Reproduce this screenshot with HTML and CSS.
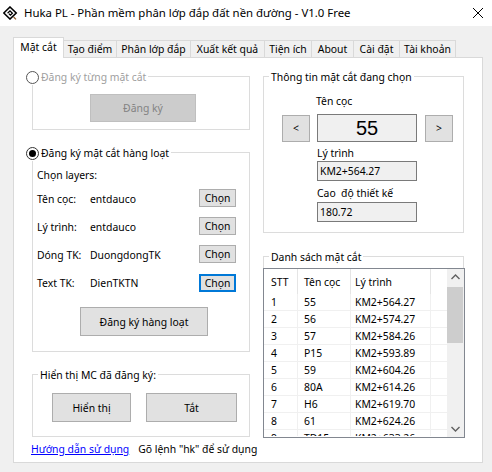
FILE: index.html
```html
<!DOCTYPE html>
<html lang="vi">
<head>
<meta charset="utf-8">
<title>Huka PL</title>
<link rel="stylesheet" href="styles.css">
</head>
<body>
<div class="titlebar">
  <svg class="logo" viewBox="0 0 15 14" aria-hidden="true">
    <polygon points="7,1 13.2,7 7,13 0.8,7" fill="none" stroke="#000" stroke-width="1.6"/>
    <path d="M4.6,7.2 L7,4.8 L9.4,7.2 L7.4,9.2 L6,7.8" fill="none" stroke="#000" stroke-width="1.3"/>
    <line x1="10.6" y1="11" x2="13" y2="13.4" stroke="#8b5a2b" stroke-width="1.2"/>
  </svg>
  <span class="title">Huka PL - Phần mềm phân lớp đắp đất nền đường - V1.0 Free</span>
  <svg class="close" viewBox="0 0 10 10" aria-hidden="true">
    <line x1="0" y1="0" x2="10" y2="10" stroke="#000" stroke-width="1"/>
    <line x1="10" y1="0" x2="0" y2="10" stroke="#000" stroke-width="1"/>
  </svg>
</div>

<div class="tabs">
  <div class="tab active t1">Mặt cắt</div>
  <div class="tab t2">Tạo điểm</div>
  <div class="tab t3">Phân lớp đắp</div>
  <div class="tab t4">Xuất kết quả</div>
  <div class="tab t5">Tiện ích</div>
  <div class="tab t6">About</div>
  <div class="tab t7">Cài đặt</div>
  <div class="tab t8">Tài khoản</div>
</div>

<div class="panel">
  <div class="left">
    <div class="group g1">
      <div class="gtitle radio-title disabled">
        <span class="radio"></span><span>Đăng ký từng mặt cắt</span>
      </div>
      <div class="btn btn-disabled b-dangky">Đăng ký</div>
    </div>

    <div class="group g2">
      <div class="gtitle radio-title">
        <span class="radio checked"></span><span>Đăng ký mặt cắt hàng loạt</span>
      </div>
      <div class="layers-label">Chọn layers:</div>
      <div class="layer-row">
        <span>Tên cọc:</span><span>entdauco</span><span class="btn btn-chon">Chọn</span>
      </div>
      <div class="layer-row">
        <span>Lý trình:</span><span>entdauco</span><span class="btn btn-chon">Chọn</span>
      </div>
      <div class="layer-row">
        <span>Dóng TK:</span><span>DuongdongTK</span><span class="btn btn-chon">Chọn</span>
      </div>
      <div class="layer-row">
        <span>Text TK:</span><span>DienTKTN</span><span class="btn btn-chon focused">Chọn</span>
      </div>
      <div class="btn b-hangloat">Đăng ký hàng loạt</div>
    </div>

    <div class="group g3">
      <div class="gtitle plain-title">Hiển thị MC đã đăng ký:</div>
      <div class="show-row">
        <div class="btn b-hienthi">Hiển thị</div>
        <div class="btn b-tat">Tắt</div>
      </div>
    </div>

    <div class="help-row">
      <a class="link" href="#">Hướng dẫn sử dụng</a>
      <span class="hint">Gõ lệnh "hk" để sử dụng</span>
    </div>
  </div>

  <div class="right">
    <div class="group ga">
      <div class="gtitle plain-title">Thông tin mặt cắt đang chọn</div>
      <div class="lbl lbl-tencoc">Tên cọc</div>
      <div class="nav-row">
        <div class="btn b-nav">&lt;</div>
        <div class="big-box">55</div>
        <div class="btn b-nav">&gt;</div>
      </div>
      <div class="lbl lbl-ly">Lý trình</div>
      <div class="tbox">KM2+564.27</div>
      <div class="lbl lbl-cao">Cao&nbsp; độ thiết kế</div>
      <div class="tbox tbox2">180.72</div>
    </div>

    <div class="group gb">
      <div class="gtitle plain-title">Danh sách mặt cắt</div>
      <div class="listview">
        <div class="lv-content">
          <div class="lv-head">
            <span class="c1">STT</span><span class="c2">Tên cọc</span><span class="c3">Lý trình</span><span class="c4"></span>
          </div>
          <div class="lv-row"><span class="c1">1</span><span class="c2">55</span><span class="c3">KM2+564.27</span><span class="c4"></span></div>
          <div class="lv-row"><span class="c1">2</span><span class="c2">56</span><span class="c3">KM2+574.27</span><span class="c4"></span></div>
          <div class="lv-row"><span class="c1">3</span><span class="c2">57</span><span class="c3">KM2+584.26</span><span class="c4"></span></div>
          <div class="lv-row"><span class="c1">4</span><span class="c2">P15</span><span class="c3">KM2+593.89</span><span class="c4"></span></div>
          <div class="lv-row"><span class="c1">5</span><span class="c2">59</span><span class="c3">KM2+604.26</span><span class="c4"></span></div>
          <div class="lv-row"><span class="c1">6</span><span class="c2">80A</span><span class="c3">KM2+614.26</span><span class="c4"></span></div>
          <div class="lv-row"><span class="c1">7</span><span class="c2">H6</span><span class="c3">KM2+619.70</span><span class="c4"></span></div>
          <div class="lv-row"><span class="c1">8</span><span class="c2">61</span><span class="c3">KM2+624.26</span><span class="c4"></span></div>
          <div class="lv-row lv-partial"><span class="c1">9</span><span class="c2">TD15</span><span class="c3">KM2+633.26</span><span class="c4"></span></div>
        </div>
        <div class="scrollbar">
          <div class="sb-btn">
            <svg viewBox="0 0 17 17" aria-hidden="true"><polyline points="4.5,10 8.5,6 12.5,10" fill="none" stroke="#606060" stroke-width="1.4"/></svg>
          </div>
          <div class="sb-thumb"></div>
          <div class="sb-track"></div>
          <div class="sb-btn">
            <svg viewBox="0 0 17 17" aria-hidden="true"><polyline points="4.5,7 8.5,11 12.5,7" fill="none" stroke="#606060" stroke-width="1.4"/></svg>
          </div>
        </div>
      </div>
    </div>
  </div>
</div>
</body>
</html>
```

FILE: styles.css
```css
* { box-sizing: border-box; }

html, body {
  margin: 0;
  padding: 0;
}

body {
  width: 492px;
  height: 472px;
  overflow: hidden;
  background: #f0f0f0;
  font-family: "Noto Sans", "Open Sans", sans-serif;
  font-size: 10.4px;
  line-height: 16px;
  color: #000;
}

/* Title bar */
.titlebar {
  height: 26px;
  background: #fff;
  display: flex;
  align-items: center;
  padding-left: 3px;
}
.logo {
  width: 15px;
  height: 14px;
  margin-right: 6px;
}
.title {
  flex: 1;
  white-space: nowrap;
  font-size: 11.4px;
}
.close {
  width: 10px;
  height: 10px;
  margin-right: 9px;
}

/* Tabs */
.tabs {
  display: flex;
  align-items: flex-end;
  height: 20px;
  margin: 11px 0 0 13px;
}
.tab {
  height: 17px;
  border-top: 1px solid #d9d9d9;
  border-right: 1px solid #d9d9d9;
  background: #f0f0f0;
  display: flex;
  align-items: center;
  justify-content: center;
  white-space: nowrap;
}
.tab.active {
  height: 21px;
  border-left: 1px solid #d9d9d9;
  background: #fff;
  margin-bottom: -1px;
  position: relative;
  z-index: 1;
  padding-bottom: 2px;
}
.t1 { width: 51px; }
.t2 { width: 53px; }
.t3 { width: 74px; }
.t4 { width: 74px; }
.t5 { width: 47px; }
.t6 { width: 42px; }
.t7 { width: 46px; }
.t8 { width: 56px; }

/* Panel */
.panel {
  margin-left: 13px;
  width: 470px;
  height: 406px;
  border: 1px solid #d9d9d9;
  background: #fff;
  display: flex;
  gap: 13px;
  padding: 18px 0 0 18px;
}
.left {
  width: 218px;
  display: flex;
  flex-direction: column;
}
.right {
  width: 201px;
  display: flex;
  flex-direction: column;
}

/* Group boxes */
.group {
  border: 1px solid #dcdcdc;
}
.gtitle {
  display: flex;
  align-items: center;
  height: 16px;
  margin-top: -8px;
  background: #fff;
  width: max-content;
  white-space: nowrap;
}
.radio-title {
  margin-left: -7px;
  padding-right: 2px;
}
.plain-title {
  margin-left: 5px;
  padding: 0 2px;
}
.disabled { color: #a0a0a0; }

.radio {
  width: 13px;
  height: 13px;
  border: 1px solid #333;
  border-radius: 50%;
  margin-right: 2px;
  background: #fff;
  display: flex;
  align-items: center;
  justify-content: center;
}
.disabled .radio { border-color: #555; }
.radio.checked::after {
  content: "";
  width: 7px;
  height: 7px;
  border-radius: 50%;
  background: #000;
}

/* Buttons */
.btn {
  background: #e1e1e1;
  border: 1px solid #adadad;
  display: flex;
  align-items: center;
  justify-content: center;
  white-space: nowrap;
}
.btn-disabled {
  background: #cccccc;
  border-color: #bfbfbf;
  color: #838383;
}

.g1 { height: 54px; }
.b-dangky {
  width: 106px;
  height: 28px;
  margin: 9px 0 0 57px;
}

.g2 {
  height: 200px;
  margin-top: 22px;
}
.layers-label {
  margin: 6px 0 0 4px;
}
.layer-row {
  display: grid;
  grid-template-columns: 53px 1fr 37px;
  align-items: center;
  height: 28px;
  padding: 0 13px 0 4px;
}
.layers-label + .layer-row { margin-top: 2px; }
.btn-chon {
  height: 18px;
  margin-bottom: 2px;
}
.btn-chon.focused {
  border: 2px solid #0078d7;
  margin-bottom: 0;
}
.b-hangloat {
  width: 128px;
  height: 29px;
  margin: 10px 0 0 47px;
}

.g3 {
  height: 63px;
  margin-top: 22px;
}
.show-row {
  display: flex;
  gap: 15px;
  margin: 10px 0 0 19px;
}
.b-hienthi { width: 79px; height: 29px; }
.b-tat { width: 91px; height: 29px; }

.help-row {
  display: flex;
  margin: 4px 0 0 -1px;
  white-space: nowrap;
}
.link {
  color: #0000ff;
  text-decoration: underline;
}
.hint { margin-left: 9px; }

/* Right: info group */
.ga { height: 157px; }
.lbl { height: 16px; }
.lbl-tencoc { margin: 8px 0 0 52px; }
.nav-row {
  display: flex;
  align-items: center;
  margin: 5px 0 0 18px;
  height: 28px;
}
.b-nav {
  width: 28px;
  height: 27px;
}
.big-box {
  width: 100px;
  height: 28px;
  margin: 0 8px 0 7px;
  border: 1px solid #7a7a7a;
  background: #f0f0f0;
  display: flex;
  align-items: center;
  justify-content: center;
  font-family: "Liberation Sans", Arial, sans-serif;
  font-size: 20px;
}
.lbl-ly { margin: 3px 0 0 53px; }
.tbox {
  width: 100px;
  height: 20px;
  margin-left: 53px;
  border: 1px solid #7a7a7a;
  background: #f0f0f0;
  padding-left: 2px;
  display: flex;
  align-items: center;
}
.lbl-cao { margin: 4px 0 0 53px; white-space: nowrap; }
.tbox2 { margin-top: 1px; }

/* Right: list group */
.gb {
  margin-top: 23px;
  border-bottom: none;
  flex: 0 0 auto;
}
.listview {
  width: 202px;
  height: 170px;
  margin: 3px 0 0 -1px;
  border: 1px solid #828790;
  background: #fff;
  display: flex;
  overflow: hidden;
}
.lv-content {
  flex: 1;
  height: 168px;
  overflow: hidden;
}
.lv-head, .lv-row {
  display: grid;
  grid-template-columns: 34px 53px 80px 16px;
}
.lv-head {
  height: 25px;
  align-items: center;
}
.lv-head span {
  height: 25px;
  display: flex;
  align-items: center;
  border-right: 1px solid #e5e5e5;
}
.lv-row {
  height: 17px;
}
.lv-row span {
  border-right: 1px solid #f0f0f0;
  border-bottom: 1px solid #f0f0f0;
  white-space: nowrap;
  overflow: hidden;
}
.lv-partial {
  height: 6px;
  overflow: hidden;
}
.lv-partial span {
  height: 6px;
  border-bottom: none;
}
.lv-head .c4 { border-right: none; }
.lv-row .c4 { border-right: none; }
.c1 { padding-left: 7px; }
.c2 { padding-left: 6px; }
.c3 { padding-left: 4px; }

.scrollbar {
  width: 17px;
  background: #f0f0f0;
  display: flex;
  flex-direction: column;
}
.sb-btn {
  height: 17px;
  display: flex;
}
.sb-btn svg { width: 17px; height: 17px; }
.sb-thumb {
  height: 56px;
  margin: 1px 1px 0 0;
  background: #cdcdcd;
}
.sb-track { flex: 1; }
```
